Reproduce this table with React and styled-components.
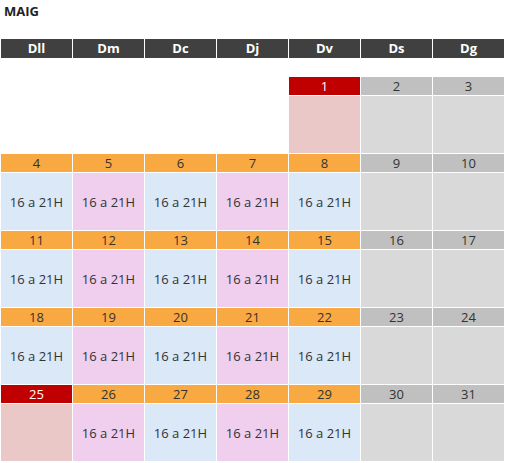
import React from "react";
import styled, { createGlobalStyle } from "styled-components";

const GlobalStyle = createGlobalStyle`
  body {
    margin: 0;
    background: #ffffff;
    font-family: "Open Sans", "Liberation Sans", sans-serif;
    color: #333333;
  }
`;

const colors = {
  workHead: "#f8a941",
  holidayHead: "#c00000",
  weekendHead: "#c0c0c0",
  blue: "#dae8f7",
  pink: "#f0cfee",
  holiday: "#eac8c7",
  weekend: "#d9d9d9",
};

const Wrapper = styled.div`
  padding-left: 1px;
  width: 503px;
`;

const Title = styled.h2`
  margin: 0;
  height: 39px;
  padding: 4px 0 0 3px;
  box-sizing: border-box;
  font-size: 13px;
  font-weight: 700;
  line-height: 15px;
  color: #222222;
`;

const Row = styled.div`
  display: grid;
  grid-template-columns: repeat(7, 71px);
  column-gap: 1px;
`;

const HeadRow = styled(Row)`
  margin-bottom: 19px;
`;

const Head = styled.div`
  height: 19px;
  background: #404040;
  color: #ffffff;
  font-size: 13px;
  font-weight: 700;
  line-height: 19px;
  text-align: center;
`;

const Week = styled(Row)`
  margin-bottom: 1px;
`;

const Day = styled.div`
  display: flex;
  flex-direction: column;
  gap: 1px;
`;

const Num = styled.div`
  height: 18px;
  line-height: 18px;
  text-align: center;
  font-size: 13px;
  background: ${(p) => colors[p.$head]};
  color: ${(p) => (p.$head === "holidayHead" ? "#ffffff" : "#333333")};
`;

const Body = styled.div`
  height: 57px;
  display: flex;
  align-items: center;
  justify-content: center;
  font-size: 13px;
  background: ${(p) => colors[p.$tone]};
`;

const Empty = styled.div`
  height: 76px;
`;

const labels = ["Dll", "Dm", "Dc", "Dj", "Dv", "Ds", "Dg"];
const holidays = [1, 25];

const weeks = [
  [null, null, null, null, 1, 2, 3],
  [4, 5, 6, 7, 8, 9, 10],
  [11, 12, 13, 14, 15, 16, 17],
  [18, 19, 20, 21, 22, 23, 24],
  [25, 26, 27, 28, 29, 30, 31],
];

const cellFor = (day, col) => {
  if (col >= 5) return { head: "weekendHead", tone: "weekend", text: "" };
  if (holidays.includes(day)) return { head: "holidayHead", tone: "holiday", text: "" };
  return { head: "workHead", tone: col % 2 === 0 ? "blue" : "pink", text: "16 a 21H" };
};

export default function App() {
  return (
    <>
      <GlobalStyle />
      <Wrapper>
        <Title>MAIG</Title>
        <HeadRow>
          {labels.map((l) => (
            <Head key={l}>{l}</Head>
          ))}
        </HeadRow>
        {weeks.map((week, w) => (
          <Week key={w}>
            {week.map((day, col) => {
              if (day === null) return <Empty key={col} />;
              const c = cellFor(day, col);
              return (
                <Day key={col}>
                  <Num $head={c.head}>{day}</Num>
                  <Body $tone={c.tone}>{c.text}</Body>
                </Day>
              );
            })}
          </Week>
        ))}
      </Wrapper>
    </>
  );
}
